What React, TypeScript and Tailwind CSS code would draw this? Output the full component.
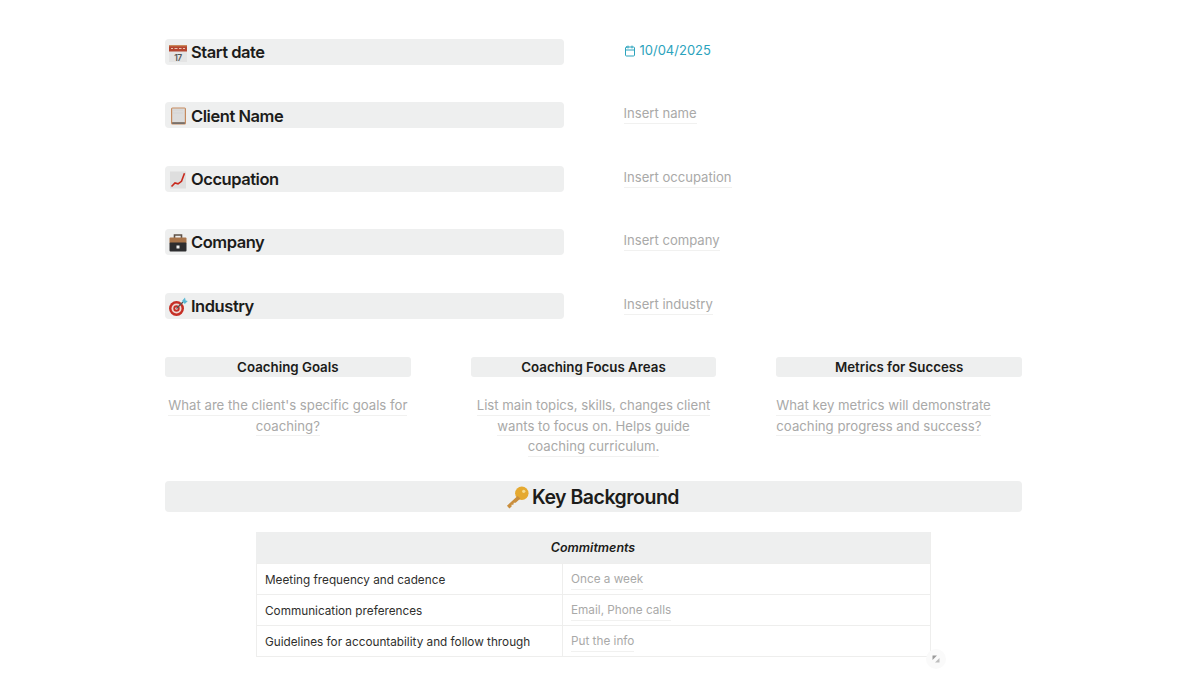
import { Calendar } from 'lucide-react'
import type { ReactNode } from 'react'

const font = { fontFamily: 'Inter, sans-serif' }

function CalendarEmoji() {
  return (
    <svg viewBox="0 0 20 20" className="h-[20px] w-[20px] shrink-0">
      <rect x="1" y="3" width="18" height="17" fill="#e4e4e4" />
      <rect x="1" y="3" width="18" height="6.5" fill="#b5452f" />
      <rect x="1" y="3" width="18" height="1.3" fill="#c98a5c" />
      <path d="M3 6.5h2M6.5 6.5h3M11 6.5h2.5M15 6.5h2" stroke="#e9c5b5" strokeWidth="1" />
      <text x="10" y="18.5" textAnchor="middle" fontSize="8.5" fill="#555" fontFamily="Inter, sans-serif">17</text>
    </svg>
  )
}

function ClipboardEmoji() {
  return (
    <svg viewBox="0 0 20 20" className="h-[20px] w-[20px] shrink-0">
      <rect x="3" y="2.5" width="15" height="17" rx="1.5" fill="#c58a5e" />
      <rect x="4.2" y="3.5" width="12.6" height="13.8" fill="#dcdcdc" />
      <rect x="4.2" y="17.3" width="12.6" height="1.6" fill="#6d6d6d" />
      <path d="M5.5 5h10M5.5 8h10" stroke="#c8c8c8" strokeWidth="0.8" strokeDasharray="1 1" />
    </svg>
  )
}

function ChartEmoji() {
  return (
    <svg viewBox="0 0 20 20" className="h-[20px] w-[20px] shrink-0">
      <rect x="2" y="2.5" width="16" height="17" fill="#dedede" />
      <path d="M3.5 17.5l3.5-3.5 3 .8 3.5-2.5 3-8" fill="none" stroke="#c9281c" strokeWidth="1.6" />
    </svg>
  )
}

function BriefcaseEmoji() {
  return (
    <svg viewBox="0 0 20 20" className="h-[20px] w-[20px] shrink-0">
      <path d="M6.5 6V3h7v3" fill="none" stroke="#5f5147" strokeWidth="1.6" />
      <rect x="1.5" y="5.5" width="17" height="6" rx="1" fill="#a8744a" />
      <rect x="1.5" y="10.5" width="17" height="9" rx="1" fill="#2d2d2f" />
      <rect x="8.5" y="13.5" width="3" height="3" fill="#f1f1f1" />
    </svg>
  )
}

function DartEmoji() {
  return (
    <svg viewBox="0 0 20 20" className="h-[20px] w-[20px] shrink-0">
      <circle cx="8.5" cy="12.5" r="7.5" fill="#c62f26" />
      <circle cx="8.5" cy="12.5" r="5" fill="#eed9d4" />
      <circle cx="8.5" cy="12.5" r="3.2" fill="#c62f26" />
      <circle cx="8.5" cy="12.5" r="1.3" fill="#eed9d4" />
      <path d="M8.5 12.5L15 6" stroke="#555" strokeWidth="1.3" />
      <path d="M14 5l3-3.5.6 3 2.2.6-3 3z" fill="#58b9d6" />
    </svg>
  )
}

function KeyEmoji() {
  return (
    <svg viewBox="0 0 24 24" className="h-[23px] w-[23px] shrink-0">
      <circle cx="16.5" cy="7.5" r="7" fill="#e5a92f" />
      <circle cx="18.5" cy="5.5" r="1.7" fill="#f6dc8e" />
      <path d="M12 10.5L1 20.5l2.5 3 2.4-2-.2-2 2 .1.4-2 2 0 5-4.6z" fill="#c98e3d" />
    </svg>
  )
}

const fields: { icon: ReactNode; label: string; value: string }[] = [
  { icon: <ClipboardEmoji />, label: 'Client Name', value: 'Insert name' },
  { icon: <ChartEmoji />, label: 'Occupation', value: 'Insert occupation' },
  { icon: <BriefcaseEmoji />, label: 'Company', value: 'Insert company' },
  { icon: <DartEmoji />, label: 'Industry', value: 'Insert industry' },
]

const columns = [
  {
    title: 'Coaching Goals',
    center: true,
    lines: ["What are the client's specific goals for", 'coaching?'],
  },
  {
    title: 'Coaching Focus Areas',
    center: true,
    lines: ['List main topics, skills, changes client', 'wants to focus on. Helps guide', 'coaching curriculum.'],
  },
  {
    title: 'Metrics for Success',
    center: false,
    lines: ['What key metrics will demonstrate', 'coaching progress and success?'],
  },
]

const rows = [
  ['Meeting frequency and cadence', 'Once a week'],
  ['Communication preferences', 'Email, Phone calls'],
  ['Guidelines for accountability and follow through', 'Put the info'],
]

function FieldRow({ icon, label, children }: { icon: ReactNode; label: string; children: ReactNode }) {
  return (
    <div className="flex h-[26px] items-center">
      <div className="flex h-[26px] w-[399px] items-center gap-[3px] rounded-[4px] bg-[#eeefef] pl-[3px] text-[16.5px] font-semibold tracking-[-0.45px] text-[#1c1c1a]">
        {icon}
        <span className="mt-[1px]">{label}</span>
      </div>
      <div className="ml-[59.5px]">{children}</div>
    </div>
  )
}

export default function App() {
  return (
    <div className="h-[700px] w-[1200px] overflow-hidden bg-white pl-[165px] pt-[39px]" style={font}>
      <div className="flex w-[857px] flex-col gap-[37.4px]">
        <FieldRow icon={<CalendarEmoji />} label="Start date">
          <div className="-mt-[2px] flex items-center gap-[4px] text-[13px] text-[#2ba3bd]">
            <Calendar className="h-[12px] w-[12px]" strokeWidth={2} />
            <span>10/04/2025</span>
          </div>
        </FieldRow>
        {fields.map((f) => (
          <FieldRow key={f.label} icon={f.icon} label={f.label}>
            <span className="-mt-[3px] block border-b border-[#f1f1f0] text-[13.1px] leading-[20px] text-[#a9a9a8]">
              {f.value}
            </span>
          </FieldRow>
        ))}
      </div>

      <div className="mt-[38px] grid w-[857px] grid-cols-3 gap-x-[60px]">
        {columns.map((c) => (
          <div key={c.title}>
            <div className="flex h-[20.5px] items-center justify-center rounded-[3px] bg-[#eeefef] pt-[3px] text-[13.3px] font-semibold text-[#1c1c1a]">
              {c.title}
            </div>
            <div className={`mt-[18px] flex flex-col ${c.center ? 'items-center' : 'items-start'}`}>
              {c.lines.map((line) => (
                <span key={line} className="h-[20.6px] whitespace-nowrap border-b border-[#f1f1f0] text-[13.2px] leading-[20px] text-[#a9a9a8]">
                  {line}
                </span>
              ))}
            </div>
          </div>
        ))}
      </div>

      <div className="mt-[24px] flex h-[31px] w-[857px] items-center justify-center gap-[3px] rounded-[4px] bg-[#eeefef] pr-[2px] pt-[2px] text-[19.5px] font-semibold tracking-[-0.5px] text-[#1c1c1a]">
        <KeyEmoji />
        <span>Key Background</span>
      </div>

      <div className="relative ml-[91px] mt-[20px] w-[675px] border-b border-r border-[#eeeeed] text-[11.75px]">
        <div className="flex h-[31px] items-center justify-center bg-[#eeefef] pt-[3px] text-[12.5px] font-semibold italic text-[#1c1c1a]">
          Commitments
        </div>
        {rows.map(([a, b]) => (
          <div key={a} className="flex h-[31px] border-l border-t border-[#eeeeed] first:border-t-0">
            <div className="flex w-[306px] items-center border-r border-[#eeeeed] pl-[8px] pt-[3px] text-[#2f2f2d]">{a}</div>
            <div className="flex items-center pl-[8px] pt-[3px] text-[#a9a9a8]">
              <span className="border-b border-[#f1f1f0]">{b}</span>
            </div>
          </div>
        ))}
        <div className="absolute -bottom-[13px] -right-[16px] flex h-[20px] w-[20px] items-center justify-center rounded-full bg-[#fafafa]">
          <svg viewBox="0 0 8 8" className="h-[8px] w-[8px]">
            <path d="M0.5 0.5h4.5l-4.5 4.5z" fill="#9a9a9a" />
            <path d="M7.5 7.5h-4.5l4.5-4.5z" fill="#bdbdbd" />
          </svg>
        </div>
      </div>
    </div>
  )
}
